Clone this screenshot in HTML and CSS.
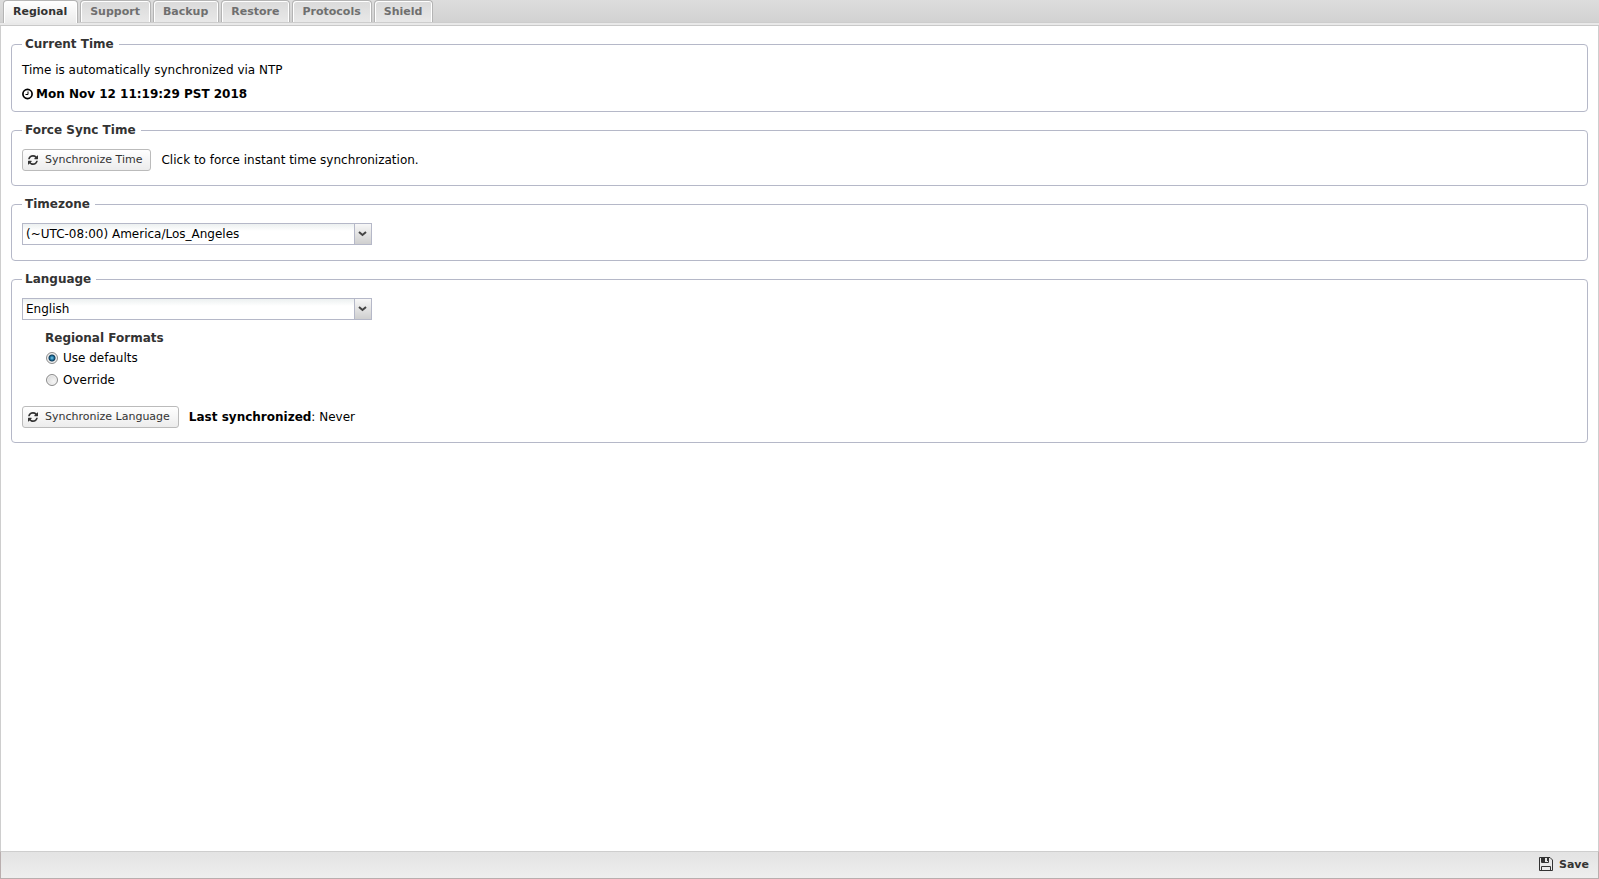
FILE: index.html
```html
<!DOCTYPE html>
<html lang="en">
<head>
<meta charset="utf-8">
<title>Regional</title>
<link rel="stylesheet" href="styles.css">
</head>
<body>
<svg class="defs" aria-hidden="true">
  <symbol id="refresh" viewBox="0 0 1536 1536">
    <path d="M1511 928q0 5-1 7-64 268-268 434.500T764 1536q-146 0-282.500-55T238 1324l-129 129q-19 19-45 19t-45-19-19-45V960q0-26 19-45t45-19h448q26 0 45 19t19 45-19 45l-137 137q71 66 161 102t187 36q134 0 250-65t186-179q11-17 53-117 8-23 30-23h192q13 0 22.500 9.500t9.500 22.500zm25-800v448q0 26-19 45t-45 19h-448q-26 0-45-19t-19-45 19-45l138-138Q969 256 768 256q-134 0-250 65T332 500q-11 17-53 117-8 23-30 23H50q-13 0-22.500-9.500T18 608v-7q65-268 270-434.500T768 0q146 0 284 55.500T1297 212l130-129q19-19 45-19t45 19 19 45z"/>
  </symbol>
  <symbol id="chevron" viewBox="0 0 9 6">
    <path d="M1 1l3.500 3L8 1"/>
  </symbol>
</svg>
<div class="page">
  <div class="tabs" role="tablist">
    <button class="tab tab-active" type="button" role="tab" aria-selected="true">Regional</button>
    <button class="tab" type="button" role="tab">Support</button>
    <button class="tab" type="button" role="tab">Backup</button>
    <button class="tab" type="button" role="tab">Restore</button>
    <button class="tab" type="button" role="tab">Protocols</button>
    <button class="tab" type="button" role="tab">Shield</button>
  </div>
  <main class="content">
    <fieldset class="group">
      <legend>Current Time</legend>
      <p class="line">Time is automatically synchronized via NTP</p>
      <p class="line">
        <svg class="clock" viewBox="0 0 12 12" aria-hidden="true"><circle cx="5.500" cy="6" r="4.600"/><path class="hands" d="M6 3.500v3H3.500"/></svg>
        <strong>Mon Nov 12 11:19:29 PST 2018</strong>
      </p>
    </fieldset>
    <fieldset class="group">
      <legend>Force Sync Time</legend>
      <div class="row">
        <button class="button" type="button"><svg class="sync" aria-hidden="true"><use href="#refresh"/></svg>Synchronize Time</button>
        <span>Click to force instant time synchronization.</span>
      </div>
    </fieldset>
    <fieldset class="group">
      <legend>Timezone</legend>
      <div class="combo">
        <select class="select" aria-label="Timezone"><option>(~UTC-08:00) America/Los_Angeles</option></select>
        <svg class="chevron" aria-hidden="true"><use href="#chevron"/></svg>
      </div>
    </fieldset>
    <fieldset class="group">
      <legend>Language</legend>
      <div class="combo">
        <select class="select" aria-label="Language"><option>English</option></select>
        <svg class="chevron" aria-hidden="true"><use href="#chevron"/></svg>
      </div>
      <div class="formats" role="radiogroup" aria-labelledby="formats-title">
        <div class="formats-title" id="formats-title">Regional Formats</div>
        <label class="option"><input class="radio" type="radio" name="formats" checked>Use defaults</label>
        <label class="option"><input class="radio" type="radio" name="formats">Override</label>
      </div>
      <div class="row">
        <button class="button" type="button"><svg class="sync" aria-hidden="true"><use href="#refresh"/></svg>Synchronize Language</button>
        <span><strong>Last synchronized</strong>: Never</span>
      </div>
    </fieldset>
  </main>
  <footer class="footer">
    <button class="save" type="button">
      <svg class="disk" viewBox="0 0 14 14" aria-hidden="true"><path class="disk-line" d="M.5.500h10.500l2.500 2.500v10.500H.5zM2.500 13.500v-4h9v4M2.500.500v5h7v-5"/><path d="M3 1h3v4H3zM8 1h1v3H8z"/></svg>
      Save
    </button>
  </footer>
</div>
</body>
</html>
```
FILE: styles.css
```css
* { box-sizing: border-box; }

body {
  margin: 0;
  background: #fff;
  color: #000;
  font: 12px/14px "DejaVu Sans", Verdana, sans-serif;
}

button, select { font-family: inherit; }

.defs { display: none; }

.page {
  display: flex;
  flex-direction: column;
  min-height: 100vh;
}

.tabs {
  display: flex;
  gap: 2px;
  height: 26px;
  padding: 0 3px 3px;
  background: linear-gradient(#cdcdcd, #cdcdcd) 0 22px / 100% 1px no-repeat,
    linear-gradient(#e9e9e9, #e9e9e9) 0 23px / 100% 2px no-repeat,
    linear-gradient(#c9c9c9, #c9c9c9) 0 25px / 100% 1px no-repeat,
    linear-gradient(#dddddd, #d0d0d0);
}

.tab {
  height: 22px;
  padding: 0 10px 1px 9px;
  border: 1px solid #b4b4b4;
  border-bottom: 0;
  border-radius: 4px 4px 0 0;
  background: linear-gradient(#dadada, #e8e8e8);
  box-shadow: inset 1px 1px #fff, inset -1px 0 #fff;
  color: #6f6f6f;
  font-size: 11px;
  font-weight: bold;
}

.tab-active {
  height: 23px;
  padding-bottom: 2px;
  background: linear-gradient(#fff, #ebebeb);
  color: #333;
}

.content {
  display: flex;
  flex: 1;
  flex-direction: column;
  gap: 11px;
  padding: 11px 10px;
  border: solid #cecece;
  border-width: 0 1px;
}

.group {
  min-width: 0;
  margin: 0;
  padding: 12px 10px 14px;
  border: 1px solid #b5b8c8;
  border-radius: 4px;
}

.group:first-child { padding: 7px 10px 5px; }

.group legend {
  padding: 0 5px 0 3px;
  color: #333;
  font-weight: bold;
}

.line {
  display: flex;
  align-items: center;
  height: 24px;
  margin: 0;
}

.clock {
  width: 12px;
  height: 12px;
  margin-right: 2px;
  fill: none;
  stroke: #000;
  stroke-width: 1.700;
}

.hands { stroke-width: 1; }

.row {
  display: flex;
  align-items: center;
  gap: 10px;
}

.button {
  display: flex;
  align-items: center;
  height: 22px;
  padding: 0 8px 1px 5px;
  border: 1px solid #bbb;
  border-radius: 3px;
  background: linear-gradient(#fff, #ececec);
  color: #333;
  font-size: 11px;
}

.sync {
  width: 10px;
  height: 10px;
  margin-right: 7px;
  fill: #333;
}

.combo {
  position: relative;
  width: 350px;
  max-width: 100%;
  margin-bottom: 1px;
}

.select {
  display: block;
  width: 100%;
  height: 22px;
  padding: 0 20px 0 3px;
  border: 1px solid #b5b8c8;
  border-radius: 0;
  appearance: none;
  background: linear-gradient(#b5b8c8, #b5b8c8) right 16px top / 1px 100% no-repeat,
    linear-gradient(#f7f7f7, #cfcfcf) right / 16px 100% no-repeat,
    linear-gradient(#ecf0f0, #fff 7px);
  color: #000;
  font-size: 12px;
}

.chevron {
  position: absolute;
  top: 8px;
  right: 5px;
  width: 9px;
  height: 6px;
  fill: none;
  stroke: #444;
  stroke-width: 2;
  pointer-events: none;
}

.formats { padding: 10px 23px 15px; }

.formats-title {
  padding-bottom: 2px;
  color: #333;
  font-weight: bold;
}

.option {
  display: flex;
  align-items: center;
  gap: 5px;
  width: max-content;
  height: 22px;
}

.radio {
  width: 12px;
  height: 12px;
  margin: 0;
  margin-left: 1px;
  border: 1px solid #8b8b8b;
  border-radius: 50%;
  appearance: none;
  background: radial-gradient(circle at 65% 65%, #f5f5f5, #d2d2d2);
  box-shadow: inset 0 0 0 1px #f1f1f1;
}

.radio:checked {
  background: radial-gradient(circle at 5px 5px, #7fd0ee 0, #1a6c9a 2px, #113e5b 3px, #e4e4e4 4px);
}

.footer {
  display: flex;
  align-items: center;
  justify-content: flex-end;
  height: 28px;
  padding: 0 9px 2px;
  border: 1px solid #b9aeae;
  border-top-color: #cecece;
  background: linear-gradient(#e3e3e3, #eee);
}

.save {
  display: flex;
  align-items: center;
  gap: 6px;
  padding: 0;
  border: 0;
  background: none;
  color: #333;
  font-size: 11px;
  font-weight: bold;
}

.disk {
  width: 14px;
  height: 14px;
  fill: #333;
}

.disk-line {
  fill: none;
  stroke: #333;
}
```
